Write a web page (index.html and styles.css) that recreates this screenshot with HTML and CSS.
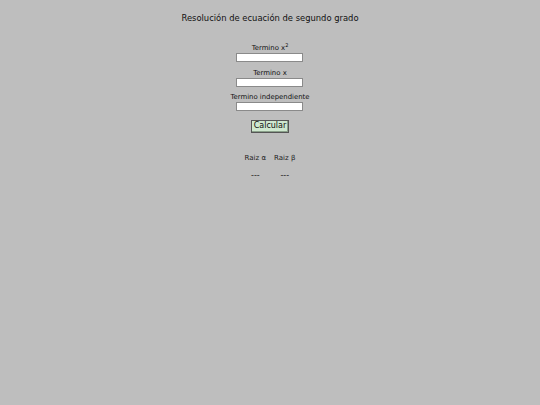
FILE: index.html
```html
<!DOCTYPE html>
<html lang="es">
<head>
<meta charset="utf-8">
<title>Ecuación de segundo grado</title>
<link rel="stylesheet" href="styles.css">
</head>
<body>
<main class="page">
  <h1 class="title">Resolución de ecuación de segundo grado</h1>
  <form class="form">
    <label class="field">
      <span class="label">Termino x<sup>2</sup></span>
      <input class="input" type="text">
    </label>
    <label class="field">
      <span class="label">Termino x</span>
      <input class="input" type="text">
    </label>
    <label class="field">
      <span class="label">Termino independiente</span>
      <input class="input" type="text">
    </label>
    <button class="btn" type="button">Calcular</button>
  </form>
  <table class="roots">
    <tr><th>Raiz α</th><th>Raiz β</th></tr>
    <tr><td>---</td><td>---</td></tr>
  </table>
</main>
</body>
</html>
```
FILE: styles.css
```css
html, body {
  margin: 0;
  background: #bebebe;
  font-family: "DejaVu Sans", Verdana, sans-serif;
  color: #111;
}
.page {
  display: flex;
  flex-direction: column;
  align-items: center;
}
.title {
  margin: 12px 0 0;
  font-size: 8.4px;
  font-weight: normal;
  line-height: 12px;
}
.form {
  margin-top: 20px;
  display: flex;
  flex-direction: column;
  align-items: center;
}
.field {
  display: flex;
  flex-direction: column;
  align-items: center;
  margin-bottom: 6.5px;
}
.label {
  font-size: 6.9px;
  line-height: 9px;
  color: #111;
}
.label sup {
  font-size: 5px;
  line-height: 0;
}
.input {
  box-sizing: border-box;
  width: 67px;
  height: 9px;
  margin: 0;
  padding: 0;
  border: 1px solid #8a8a8a;
  background: #fff;
}
.btn {
  margin-top: 2px;
  box-sizing: border-box;
  width: 38px;
  height: 13px;
  padding: 0;
  font-family: inherit;
  font-size: 8px;
  line-height: 10px;
  color: #111;
  background: #cfe8cf;
  border: 1px solid #555;
  box-shadow: inset -1px -1px 0 #8aa08a;
}
.roots {
  margin-top: 20px;
  border-collapse: separate;
  border-spacing: 8px 0;
  font-size: 7px;
  color: #222;
}
.roots th {
  font-weight: normal;
  height: 10px;
  padding: 0 0 8px;
}
.roots td {
  text-align: center;
  padding: 0;
  font-size: 8px;
}
```
